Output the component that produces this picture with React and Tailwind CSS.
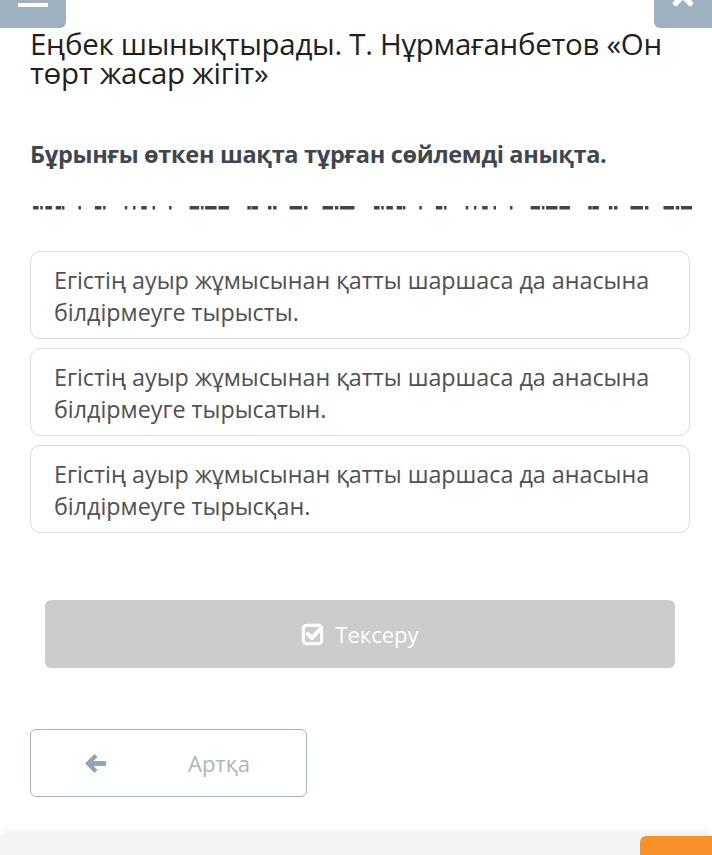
import { FaTimes } from 'react-icons/fa'

const options = [
  'Егістің ауыр жұмысынан қатты шаршаса да анасына білдірмеуге тырысты.',
  'Егістің ауыр жұмысынан қатты шаршаса да анасына білдірмеуге тырысатын.',
  'Егістің ауыр жұмысынан қатты шаршаса да анасына білдірмеуге тырысқан.',
]

// hidden answer placeholder: dashes and dots (x, width) from the left edge
const marks = [
  [3, 5], [10, 2], [15, 6], [25, 5], [31, 2], [47, 2], [63, 6], [71, 2], [92, 2], [100, 2],
  [108, 5], [119, 2], [135, 2], [155, 9], [166, 2], [170, 11], [183, 10], [211, 3], [215, 6],
  [231, 3], [236, 3], [252, 12], [266, 3], [284, 10], [296, 3], [301, 14],
]

function Placeholder() {
  const all = [...marks, ...marks.map(([x, w]) => [x + 331, w])]
  return (
    <svg width="662" height="4" className="block">
      {all.map(([x, w], i) => (
        <rect key={i} x={x * 1.03} y="0" width={w + 0.5} height="3.5" fill="#3f464e" />
      ))}
    </svg>
  )
}

function CheckSquare() {
  return (
    <svg width="25" height="25" viewBox="0 0 24 24" fill="none">
      <rect x="2.2" y="3.2" width="17.6" height="17.6" rx="3" stroke="white" strokeWidth="3" />
      <path d="M6.5 11.5l4 4 9-10" stroke="white" strokeWidth="3.8" strokeLinecap="round" strokeLinejoin="round" />
    </svg>
  )
}

function ArrowLeft() {
  return (
    <svg width="23" height="21" viewBox="0 0 23 21">
      <path d="M10.5 1.5 1.5 10.5l9 9 2.6-2.6-4.6-4.4H21.5v-4H8.5l4.6-4.4z" fill="#8fa7b8" stroke="#8fa7b8" strokeWidth="1" strokeLinejoin="round" />
    </svg>
  )
}

export default function App() {
  return (
    <div className="relative w-[712px] h-[855px] overflow-hidden bg-white font-['Open_Sans',sans-serif]">
      {/* top bar */}
      <div className="flex justify-between h-[28px]">
        <div className="w-[66px] h-[28px] bg-[#9fb1bf] rounded-br-[6px] pl-[18px] pt-[3px]">
          <div className="w-[30px] h-[4px] bg-white" />
        </div>
        <div className="w-[58px] h-[28px] bg-[#9fb1bf] rounded-bl-[6px] flex justify-center overflow-hidden">
          <FaTimes size={30} className="text-white -mt-[19px]" />
        </div>
      </div>

      <div className="pl-[30px] pr-[22px]">
        <h1 className="mt-[1px] text-[29.5px] leading-[29px] font-normal text-[#1f1f1f] tracking-[-0.3px]">
          Еңбек шынықтырады. Т. Нұрмағанбетов «Он төрт жасар жігіт»
        </h1>

        <p className="mt-[52px] text-[23.5px] leading-[30px] font-bold text-[#3e4650] tracking-[-0.3px]">
          Бұрынғы өткен шақта тұрған сөйлемді анықта.
        </p>

        <div className="mt-[37px]">
          <Placeholder />
        </div>

        <div className="mt-[41px] flex flex-col gap-[9px]">
          {options.map(o => (
            <div key={o} className="h-[88px] border border-[#dcdcdc] rounded-[10px] px-[23px] pt-[12px] text-[23.3px] leading-[32px] text-[#4d5156]">
              {o}
            </div>
          ))}
        </div>

        <div className="mt-[67px] px-[15px]">
          <button className="w-full h-[68px] bg-[#cccccc] rounded-[6px] flex items-center justify-center gap-[9px] text-white text-[22px]">
            <CheckSquare />
            <span>Тексеру</span>
          </button>
        </div>

        <div className="mt-[61px]">
          <button className="w-[277px] h-[68px] border border-[#a7b3bd] rounded-[6px] bg-white flex items-center pl-[53px] text-[22px] text-[#a9b6c0]">
            <ArrowLeft />
            <span className="ml-[81px]">Артқа</span>
          </button>
        </div>
      </div>

      {/* bottom bar */}
      <div className="absolute left-0 right-0 bottom-0 h-[20px] bg-[#f2f4f6] shadow-[0_-4px_6px_rgba(0,0,0,0.06)]">
        <div className="absolute right-0 bottom-0 w-[72px] h-[19px] bg-[#f7922a] rounded-tl-[6px]" />
      </div>
    </div>
  )
}
